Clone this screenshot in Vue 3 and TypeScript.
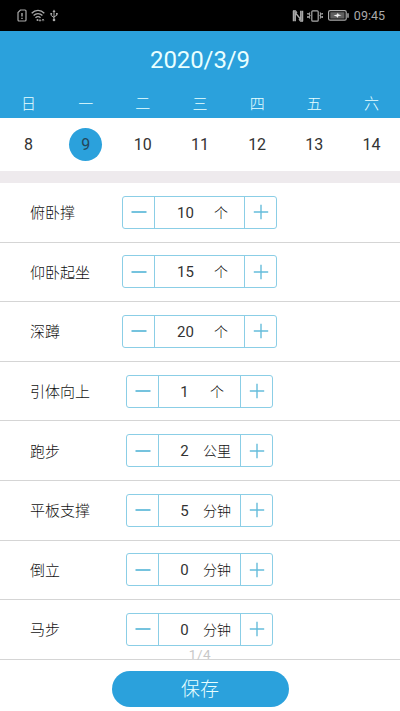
<script setup lang="ts">
import { ref } from 'vue'

interface Exercise {
  name: string
  count: number
  unit: string
}

const weekdays: string[] = ['日', '一', '二', '三', '四', '五', '六']
const dates: number[] = [8, 9, 10, 11, 12, 13, 14]
const selected = ref<number>(9)

const exercises = ref<Exercise[]>([
  { name: '俯卧撑', count: 10, unit: '个' },
  { name: '仰卧起坐', count: 15, unit: '个' },
  { name: '深蹲', count: 20, unit: '个' },
  { name: '引体向上', count: 1, unit: '个' },
  { name: '跑步', count: 2, unit: '公里' },
  { name: '平板支撑', count: 5, unit: '分钟' },
  { name: '倒立', count: 0, unit: '分钟' },
  { name: '马步', count: 0, unit: '分钟' },
])

function change(item: Exercise, delta: number): void {
  item.count = Math.max(0, item.count + delta)
}
</script>

<template>
  <main class="screen">
    <div class="status">
      <div class="status-left">
        <svg width="10" height="13" viewBox="0 0 10 13" fill="none" stroke="currentColor" stroke-width="1.2">
          <path d="M3.4 1H8a1 1 0 0 1 1 1v9a1 1 0 0 1-1 1H2a1 1 0 0 1-1-1V3.5z" />
          <path d="M5 4v3.6M5 8.8v1.3" stroke-width="1.4" />
        </svg>
        <svg class="wifi" width="14" height="13" viewBox="0 0 14 13" fill="none" stroke="currentColor" stroke-width="1.3">
          <path d="M.7 4.2C4.2.4 9.8.4 13.3 4.2M2.6 6.5c2.5-2.6 6.3-2.6 8.8 0M4.5 8.7c1.4-1.5 3.6-1.5 5 0" />
          <circle cx="6.5" cy="11" r="1" fill="currentColor" stroke="none" />
          <path d="M9 10.2v2M8 11.2l1 1 1-1M12 12.2v-2M11 11.2l1-1 1 1" stroke-width=".9" />
        </svg>
        <svg width="8" height="13" viewBox="0 0 8 13" fill="none" stroke="currentColor" stroke-width="1">
          <path d="M4 2v8M1.2 4.5v2L4 8.5M6.8 4.5v1.8L4 7.8" />
          <path d="M2.5 3 4 .6 5.5 3zM.4 4h1.7v1.5H.4zM6 4h1.7v1.5H6z" fill="currentColor" stroke="none" />
          <circle cx="4" cy="11" r="1.3" fill="currentColor" stroke="none" />
        </svg>
      </div>
      <div class="status-right">
        <svg width="12" height="12" viewBox="0 0 12 12" fill="none" stroke="currentColor">
          <path d="M1.5 11.2V.8M3.2 11.2V2.6L8.8 9.400V.8M10.500 .8v10.400" stroke-width="1.5" />
          <path d="M1 .8h2.500l1.500 2M11 11.200H8.500L7 9.200" stroke-width="1.200" />
        </svg>
        <svg class="vibrate" width="16" height="12" viewBox="0 0 16 12" fill="none" stroke="currentColor" stroke-width="1.2">
          <rect x="4.8" y=".8" width="6.4" height="10.4" rx="1" />
          <path d="M3 2.5 2 4l1 1.5L2 7l1 1.5M.8 3v1.5M.8 6v2M13 2.5 14 4l-1 1.5L14 7l-1 1.5M15.3 3v1.5M15.3 6v2" />
        </svg>
        <svg class="battery" width="21" height="11" viewBox="0 0 21 11" fill="none" stroke="currentColor">
          <rect x=".6" y=".6" width="17.6" height="9.6" rx="1.5" stroke-width="1.2" />
          <rect x="2.3" y="2.2" width="14.2" height="6.4" fill="#606060" stroke="none" />
          <path d="M5.5 5.4 9 4.5l.8-1.8.8 1.7 3 .9-3.4 1L9.4 8l-.7-1.6z" fill="#eee" stroke="none" />
          <path d="M20 3.3v4.4" stroke-width="1.5" />
        </svg>
        <span class="clock">09:45</span>
      </div>
    </div>

    <header class="head">
      <h1 class="title">2020/3/9</h1>
      <div class="week">
        <span v-for="day in weekdays" :key="day">{{ day }}</span>
      </div>
    </header>

    <nav class="dates">
      <button
        v-for="date in dates"
        :key="date"
        class="date"
        :class="{ active: date === selected }"
        @click="selected = date"
      ><span>{{ date }}</span></button>
    </nav>

    <section class="list">
      <div v-for="item in exercises" :key="item.name" class="row">
        <span class="name">{{ item.name }}</span>
        <div class="stepper" :class="{ wide: item.count >= 10 }">
          <button class="step" aria-label="减少" @click="change(item, -1)">
            <svg width="16" height="16" viewBox="0 0 16 16"><path d="M.5 8h15" stroke="#66bddb" stroke-width="1.8" /></svg>
          </button>
          <div class="value">
            <span class="count">{{ item.count }}</span>
            <span class="unit">{{ item.unit }}</span>
          </div>
          <button class="step" aria-label="增加" @click="change(item, 1)">
            <svg width="16" height="16" viewBox="0 0 16 16"><path d="M.8 8h14.4M8 .8v14.4" stroke="#66bddb" stroke-width="1.4" /></svg>
          </button>
        </div>
      </div>
      <span class="page">1/4</span>
    </section>

    <footer class="foot">
      <button class="save">保存</button>
    </footer>
  </main>
</template>

<style>
body {
  background: #fff;
}
</style>

<style scoped>
.screen {
  display: flex;
  flex-direction: column;
  width: 400px;
  height: 711px;
  overflow: hidden;
  background: #fff;
  color: #333;
  font-family: Roboto, "Noto Sans CJK SC", sans-serif;
}

button {
  margin: 0;
  padding: 0;
  border: 0;
  background: none;
  color: inherit;
  font: inherit;
}

svg {
  display: block;
}

.status {
  box-sizing: border-box;
  flex: none;
  display: flex;
  justify-content: space-between;
  height: 31px;
  padding: 0 15px 0 17px;
  background: #000;
  color: #aaa;
}

.status-left,
.status-right {
  display: flex;
  align-items: center;
}

.status-left {
  gap: 4px;
}

.wifi {
  margin-right: 1px;
}

.vibrate {
  margin-left: 3px;
}

.battery {
  margin: 0 5px 0 5px;
}

.clock {
  font-size: 12.5px;
  line-height: 32px;
}

.head {
  flex: none;
  height: 87px;
  background: #2ba1dc;
  color: #e9ffff;
}

.title {
  margin: 0;
  padding-top: 13px;
  font-size: 24px;
  font-weight: 400;
  line-height: 32px;
  letter-spacing: -0.1px;
  text-align: center;
}

.week {
  display: grid;
  grid-template-columns: repeat(7, 1fr);
  padding-top: 17px;
  font-size: 15px;
  font-weight: 300;
  line-height: 23px;
  text-align: center;
}

.dates {
  flex: none;
  display: grid;
  grid-template-columns: repeat(7, 1fr);
  align-items: center;
  height: 53px;
  border-bottom: 12px solid #eeeaed;
}

.date {
  display: flex;
  justify-content: center;
  font-size: 16px;
}

.date span {
  width: 33px;
  line-height: 33px;
  border-radius: 50%;
  text-align: center;
}

.date.active span {
  background: #2ba1dc;
  color: #24475b;
}

.list {
  position: relative;
  flex: none;
  display: grid;
  grid-template-rows: repeat(8, 59.6px);
}

.row {
  display: grid;
  grid-template-columns: 100px 200px 100px;
  align-items: center;
  border-bottom: 1px solid #d5d5d5;
}

.name {
  padding: 2px 0 0 30px;
  color: #111;
  font-size: 15px;
  font-weight: 300;
  line-height: 24px;
  white-space: nowrap;
}

.stepper {
  box-sizing: border-box;
  justify-self: center;
  display: flex;
  height: 33px;
  margin-right: 1px;
  border: 1px solid #8bcee6;
  border-radius: 3px;
}

.step {
  display: grid;
  place-items: center;
  width: 31px;
}

.value {
  display: flex;
  box-sizing: border-box;
  width: 83px;
  padding-left: 7px;
  border: solid #8bcee6;
  border-width: 0 1px;
  line-height: 32px;
}

.count {
  width: 37px;
  font-size: 15px;
  text-align: center;
}

.unit {
  width: 28px;
  color: #111;
  font-size: 14px;
  font-weight: 300;
  text-align: center;
  white-space: nowrap;
}

.wide .value {
  width: 91px;
  padding-left: 12px;
}

.wide .unit {
  width: 34px;
}

.page {
  position: absolute;
  bottom: -2px;
  left: 0;
  width: 100%;
  color: #c8c8c8;
  font-size: 13.5px;
  line-height: 16px;
  letter-spacing: 0.6px;
  text-align: center;
}

.foot {
  display: flex;
  justify-content: center;
  padding-top: 11.2px;
}

.save {
  width: 177px;
  height: 36px;
  border-radius: 18px;
  background: #2ba1dc;
  color: #e9ffff;
  font-size: 19px;
  font-weight: 300;
  line-height: 38px;
}
</style>
